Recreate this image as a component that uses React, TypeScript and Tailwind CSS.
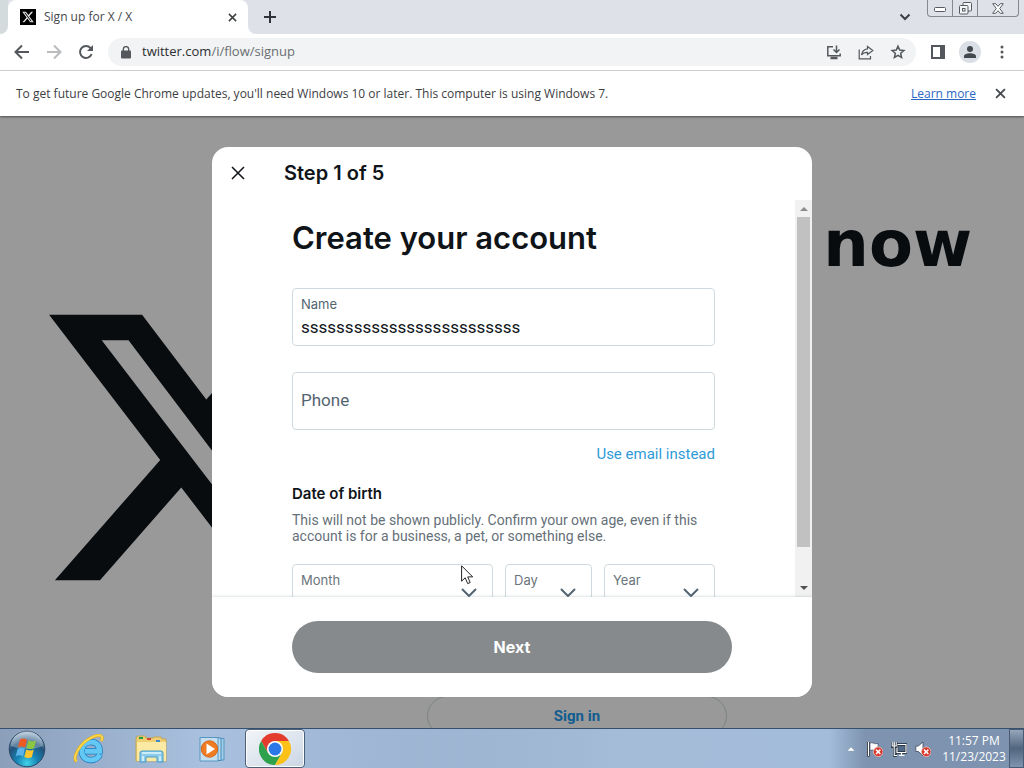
import type { ReactNode } from 'react';

const X_PATH =
  'M18.244 2.25h3.308l-7.227 8.26 8.502 11.24H16.17l-5.214-6.817L4.99 21.75H1.68l7.73-8.835L1.254 2.25H8.08l4.713 6.231zm-1.161 17.52h1.833L7.084 4.126H5.117z';

const UI = "font-['Open_Sans','Noto_Sans',sans-serif]";
const BODY = "font-['Inter','Roboto',sans-serif]";

function Cross({ className }: { className: string }) {
  return (
    <svg viewBox="0 0 12 12" className={className} fill="none" stroke="currentColor" strokeWidth="2">
      <path d="M1.2 1.2l9.6 9.6M10.8 1.2L1.2 10.8" />
    </svg>
  );
}

function IconButton({ label, children, className = '' }: { label: string; children: ReactNode; className?: string }) {
  return (
    <button type="button" aria-label={label} className={`flex size-8 shrink-0 items-center justify-center ${className}`}>
      {children}
    </button>
  );
}

function TabStrip() {
  return (
    <div className="flex h-[34px] items-stretch bg-[#dee1e8]">
      <div className="w-2 shrink-0 bg-white">
        <div className="h-full rounded-br-lg bg-[#d3dbdd]" />
      </div>
      <div className="flex w-60 shrink-0 items-center rounded-t-lg bg-white pr-2 pl-3">
        <svg viewBox="0 0 24 24" className="size-4 shrink-0">
          <rect width="24" height="24" />
          <path d={X_PATH} fill="#e8e8e8" transform="translate(2.4 2.4) scale(.8)" />
        </svg>
        <span className="ml-2 flex-1 text-xs text-[#45484c]">Sign up for X / X</span>
        <button type="button" aria-label="Close tab" className="flex size-4 items-center justify-center text-[#3c4043]">
          <Cross className="size-[9px]" />
        </button>
      </div>
      <div className="flex flex-1 bg-white">
        <div className="flex flex-1 items-stretch rounded-bl-lg bg-[#dee1e8]">
          <button type="button" aria-label="New tab" className="ml-1.5 flex w-8 items-center justify-center text-[#303338]">
            <svg viewBox="0 0 12 12" className="size-3" stroke="currentColor" strokeWidth="2">
              <path d="M6 0v12M0 6h12" />
            </svg>
          </button>
          <div className="flex-1" />
          <button type="button" aria-label="Search tabs" className="mr-1.5 flex w-8 items-center justify-center text-[#3c4043]">
            <svg viewBox="0 0 12 8" className="h-2 w-3" fill="none" stroke="currentColor" strokeWidth="2">
              <path d="M1.5 1.5L6 6l4.500-4.500" />
            </svg>
          </button>
          <div className="mr-[5px] flex h-[17px] divide-x divide-[#85898f] rounded-b border border-t-0 border-[#85898f] text-[#575b61]">
            <button type="button" aria-label="Minimize" className="flex w-[25px] items-center justify-center">
              <svg viewBox="0 0 12 10" className="h-[10px] w-3" fill="#fff" stroke="currentColor">
                <rect x=".5" y="4.500" width="11" height="4" rx="1" />
              </svg>
            </button>
            <button type="button" aria-label="Restore" className="flex w-[25px] items-center justify-center">
              <svg viewBox="0 0 13 13" className="size-[13px]" fill="#f4f5f7" stroke="currentColor">
                <rect x="4" y=".5" width="8.500" height="8.500" rx="1" />
                <rect x=".5" y="3.500" width="8.500" height="8.500" rx="1" />
                <rect x="3.500" y="6.500" width="2.500" height="2.500" />
              </svg>
            </button>
            <button type="button" aria-label="Close window" className="flex w-10 items-center justify-center">
              <svg viewBox="0 0 12 11" className="h-[11px] w-3" fill="#fff" stroke="currentColor">
                <path d="M.7.7h3L6 3.300 8.300.7h3L7.700 5.500l3.600 4.800h-3L6 7.700l-2.300 2.600h-3l3.600-4.800z" />
              </svg>
            </button>
          </div>
        </div>
      </div>
    </div>
  );
}

function Toolbar() {
  return (
    <div className="flex h-[37px] items-center border-b border-[#d5d5d5] bg-white px-1.5 text-[#54575b]">
      <IconButton label="Back">
        <svg viewBox="0 0 16 16" className="size-4" fill="none" stroke="currentColor" strokeWidth="2">
          <path d="M15 8H2M8 1.500L1.500 8 8 14.500" />
        </svg>
      </IconButton>
      <IconButton label="Forward" className="text-[#b9bbbd]">
        <svg viewBox="0 0 16 16" className="size-4" fill="none" stroke="currentColor" strokeWidth="2">
          <path d="M1 8h13M8 1.500L14.500 8 8 14.500" />
        </svg>
      </IconButton>
      <IconButton label="Reload">
        <svg viewBox="0 0 16 16" className="size-4" fill="none" stroke="currentColor" strokeWidth="2">
          <path d="M13.600 10.200A6 6 0 1 1 12.600 4.100L14 5.500" />
          <path d="M15 1v6H9z" fill="currentColor" stroke="none" />
        </svg>
      </IconButton>
      <div className="ml-1.5 flex h-7 min-w-0 flex-1 items-center rounded-full bg-[#f1f3f4] pr-0.5 pl-[13px]">
        <svg viewBox="0 0 10 13" className="h-[13px] w-[10px] shrink-0">
          <rect y="4.500" width="10" height="8" rx="1" fill="#54575b" />
          <path d="M2.300 5V3.300a2.700 2.700 0 0 1 5.400 0V5" fill="none" stroke="#54575b" strokeWidth="1.400" />
        </svg>
        <span className="ml-[11px] flex-1 text-[13px] text-[#6a6d71]">
          <span className="text-[#2c2e31]">twitter.com</span>/i/flow/signup
        </span>
        <IconButton label="Install">
          <svg viewBox="0 0 16 15" className="h-[15px] w-4" fill="none" stroke="currentColor" strokeWidth="1.500">
            <path d="M7 1.800H1.800v9h12.400V8.500M10.500.5v6M7.500 4.500l3 3 3-3" />
            <path d="M4.500 13h7" strokeWidth="2.500" />
          </svg>
        </IconButton>
        <IconButton label="Share">
          <svg viewBox="0 0 16 15" className="h-[15px] w-4" fill="none" stroke="currentColor" strokeWidth="1.200">
            <path d="M1.200 4.500v9.300h11.300V11" />
            <path d="M9.500 1.500l5.300 4-5.300 4V7.300C7 7.200 5 8 3.500 10c.5-3.500 2.500-5.800 6-6.200z" />
          </svg>
        </IconButton>
        <IconButton label="Bookmark this tab">
          <svg viewBox="0 0 16 16" className="size-4" fill="none" stroke="currentColor" strokeWidth="1.500">
            <path d="M8 2.200l1.700 3.900 4.200.4-3.200 2.800.9 4.200L8 11.300l-3.600 2.200.9-4.200-3.200-2.800 4.200-.4z" />
          </svg>
        </IconButton>
      </div>
      <IconButton label="Side panel" className="ml-1.5">
        <svg viewBox="0 0 14 14" className="size-3.5">
          <path d="M1 1h12v12H1z" fill="none" stroke="currentColor" strokeWidth="2" />
          <path d="M9 0h5v14H9z" fill="currentColor" />
        </svg>
      </IconButton>
      <IconButton label="Profile">
        <svg viewBox="0 0 22 22" className="size-[22px]">
          <circle cx="11" cy="11" r="11" fill="#dadee5" />
          <circle cx="11" cy="8" r="3" fill="#43484f" />
          <path d="M5 17v-1.800c0-2 3-3 6-3s6 1 6 3V17z" fill="#43484f" />
        </svg>
      </IconButton>
      <IconButton label="Menu">
        <svg viewBox="0 0 4 14" className="h-3.5 w-1" fill="currentColor">
          <circle cx="2" cy="2" r="1.500" />
          <circle cx="2" cy="7" r="1.500" />
          <circle cx="2" cy="12" r="1.500" />
        </svg>
      </IconButton>
    </div>
  );
}

function InfoBar() {
  return (
    <div className="z-10 flex h-[45px] items-center bg-white pr-[18px] pl-4 text-xs text-[#3c4043] shadow-[0_1px_2px_rgba(0,0,0,0.5)]">
      <p className="flex-1">
        To get future Google Chrome updates, you'll need Windows 10 or later. This computer is using Windows 7.
      </p>
      <a href="#learn" className="mr-[19px] text-[#2a67c5] underline">
        Learn more
      </a>
      <button type="button" aria-label="Dismiss" className="text-[#45484c]">
        <Cross className="size-[11px]" />
      </button>
    </div>
  );
}

function BirthSelect({ id, label, className }: { id: string; label: string; className: string }) {
  return (
    <div className={`grid h-[58px] rounded border border-[#cfd9de] ${className}`}>
      <label htmlFor={id} className="col-start-1 row-start-1 px-2 pt-1.5 text-[13px] leading-[18px] text-[#6a747c]">
        {label}
      </label>
      <select id={id} className="col-start-1 row-start-1 w-full appearance-none bg-transparent outline-none" />
      <svg
        viewBox="0 0 16 10"
        className="pointer-events-none col-start-1 row-start-1 mt-[23px] mr-[15px] h-[10px] w-4 justify-self-end"
        fill="none"
        stroke="#536471"
        strokeWidth="2"
      >
        <path d="M1 1l7 7 7-7" />
      </svg>
    </div>
  );
}

function ScrollBar() {
  return (
    <div className="flex w-[17px] shrink-0 flex-col items-center bg-[#f1f1f1]" aria-hidden="true">
      <div className="flex h-[17px] items-center">
        <svg viewBox="0 0 8 4" className="h-1 w-2" fill="#8b8b8b">
          <path d="M0 4l4-4 4 4z" />
        </svg>
      </div>
      <div className="h-[330px] w-[13px] bg-[#c1c1c1]" />
      <div className="flex-1" />
      <div className="flex h-[19px] items-center">
        <svg viewBox="0 0 8 4" className="h-1 w-2" fill="#505050">
          <path d="M0 0l4 4 4-4z" />
        </svg>
      </div>
    </div>
  );
}

function SignupDialog() {
  return (
    <div
      role="dialog"
      aria-label="Create your account"
      className="flex h-[550px] w-[600px] flex-col overflow-hidden rounded-2xl bg-white text-[#0f1419]"
    >
      <header className="flex h-[52px] shrink-0 items-center pl-[19px]">
        <button type="button" aria-label="Close" className="flex size-[14px] items-center justify-center">
          <svg viewBox="0 0 14 14" className="size-[14px]" stroke="currentColor" strokeWidth="1.500">
            <path d="M1 1l12 12M13 1L1 13" />
          </svg>
        </button>
        <h2 className="ml-[39px] text-xl font-semibold">Step 1 of 5</h2>
      </header>
      <div className="mt-px flex min-h-0 flex-1">
        <form id="signup" className="min-w-0 flex-1 overflow-hidden px-20 pt-5">
          <h1 className="text-[31px] leading-9 font-semibold">Create your account</h1>
          <div className="mt-8 flex h-[58px] flex-col rounded border border-[#cfd9de] px-2 pt-1.5">
            <label htmlFor="name" className="text-[13px] leading-[18px] text-[#536471]">
              Name
            </label>
            <input
              id="name"
              defaultValue="sssssssssssssssssssssssss"
              className="h-7 w-full font-['Roboto',sans-serif] text-[17px] outline-none"
            />
          </div>
          <div className="mt-[26px] flex h-[58px] items-center rounded border border-[#cfd9de] px-2">
            <input
              aria-label="Phone"
              placeholder="Phone"
              className="w-full font-['Roboto',sans-serif] text-[17px] outline-none placeholder:text-[#536471]"
            />
          </div>
          <div className="mt-3.5 flex justify-end">
            <a href="#email" className="font-['Roboto',sans-serif] text-[15px] leading-5 text-[#2f9bd8]">
              Use email instead
            </a>
          </div>
          <h3 className="mt-5 text-[15px] leading-5 font-semibold">Date of birth</h3>
          <p className="mt-2 font-['Roboto',sans-serif] text-sm leading-4 text-[#667078]">
            This will not be shown publicly. Confirm your own age, even if this account is for a business, a pet, or
            something else.
          </p>
          <div className="mt-5 flex gap-3">
            <BirthSelect id="month" label="Month" className="flex-1" />
            <BirthSelect id="day" label="Day" className="w-[87px]" />
            <BirthSelect id="year" label="Year" className="w-[111px]" />
          </div>
        </form>
        <ScrollBar />
      </div>
      <footer className="z-10 bg-white px-20 py-6 shadow-[0_0_3px_rgba(101,119,134,0.35)]">
        <button
          type="submit"
          form="signup"
          className="h-[52px] w-full rounded-full bg-[#878a8c] text-base font-bold text-white"
        >
          Next
        </button>
      </footer>
    </div>
  );
}

function LandingPage() {
  return (
    <main className={`relative min-h-0 flex-1 overflow-hidden bg-white ${BODY}`}>
      <div className="flex justify-between">
        <svg viewBox="0 0 24 24" className="mt-[168px] ml-8 size-[327px] shrink-0" fill="#0f1419">
          <path d={X_PATH} />
        </svg>
        <div className="mr-[52px] w-[545px] pt-[92px]">
          <h1 className="text-right font-['DejaVu_Sans',sans-serif] text-[64px] leading-[72px] font-bold text-[#0f1419]">now</h1>
          <button
            type="button"
            className="mt-[416px] h-10 w-[300px] rounded-full border border-[#cfd9de] font-['Roboto',sans-serif] text-[15px] font-bold text-[#1d9bf0]"
          >
            Sign in
          </button>
        </div>
      </div>
      <div className="absolute inset-0 flex items-center justify-center bg-black/40">
        <SignupDialog />
      </div>
      <svg viewBox="0 0 13 20" className="absolute top-[449px] left-[461px] h-5 w-[13px]" fill="#fff" stroke="#222">
        <path d="M.6.8v15.400l3.600-3.400 2.500 5.800 2.500-1.100-2.500-5.600h5z" />
      </svg>
    </main>
  );
}

function StartOrb() {
  return (
    <svg viewBox="0 0 38 38" className="size-[38px]">
      <defs>
        <radialGradient id="orb" cx=".5" cy=".9" r=".85">
          <stop offset="0" stopColor="#42d2e8" />
          <stop offset=".35" stopColor="#1684b5" />
          <stop offset=".7" stopColor="#225179" />
          <stop offset="1" stopColor="#9db6cb" />
        </radialGradient>
      </defs>
      <circle cx="19" cy="19" r="17.800" fill="url(#orb)" stroke="#2b4867" />
      <path d="M3 16a16 15 0 0 1 32 0c-9 4-22 4-32 0z" fill="#fff" opacity=".28" />
      <path d="M12 9.500c2.500-1.500 5-1 7 .3l-1.800 7.700c-2.300-1.400-4.700-1.500-7.200-.2z" fill="#ee5a24" />
      <path d="M20.300 10.300c2.500 1.400 5 1.400 7.700.2l-2 7.700c-2.500 1.200-5 1.100-7.500-.2z" fill="#8dc63f" />
      <path d="M9.700 18.700c2.500-1.300 5-1.100 7.200.2l-1.900 7.500c-2.200-1.300-4.600-1.500-7.300-.2z" fill="#5bb3ea" />
      <path d="M18.200 19.400c2.500 1.400 5 1.500 7.500.3l-1.900 7.500c-2.600 1.200-5 1-7.500-.3z" fill="#fdc62f" />
    </svg>
  );
}

function ExplorerE() {
  return (
    <svg viewBox="0 0 32 32" className="size-8" fill="none">
      <path d="M27 21.500C25 25 21.800 27 18 27c-5.400 0-9.200-3.900-9.200-9S12.600 9 18 9c5.400 0 8.700 3.700 8.500 9.300H12" stroke="#1978bd" strokeWidth="6.400" />
      <path d="M27 21.500C25 25 21.800 27 18 27c-5.400 0-9.200-3.900-9.200-9S12.600 9 18 9c5.400 0 8.700 3.700 8.500 9.300H12" stroke="#63c8f3" strokeWidth="5" />
      <path d="M3.500 28.500C-1 25 6 11 17.500 5 23 2 28 1.500 29 4c.4 1 0 2.500-.8 4" stroke="#d69c12" strokeWidth="3" />
      <path d="M3.500 28.500C-1 25 6 11 17.500 5 23 2 28 1.500 29 4c.4 1 0 2.500-.8 4" stroke="#fbd548" strokeWidth="2.200" />
    </svg>
  );
}

function FolderIcon() {
  return (
    <svg viewBox="0 0 32 28" className="h-7 w-8">
      <path d="M1 3l2-2h7l1 2h7l1-1h7l1 2h4v22H1z" fill="#efcf72" stroke="#c2a552" />
      <path d="M4 2h4v2H4z" fill="#279a44" />
      <path d="M12 3h4v2h-4z" fill="#d24830" />
      <path d="M21 5h4v2h-4z" fill="#3c8bc4" />
      <path d="M2 7h29v19H2z" fill="#faeaa3" />
      <path d="M5 27V18q0-2 2-2h19q2 0 2 2v9h-6v-5H11v5z" fill="#8cccea" stroke="#4b9bc7" />
      <path d="M7 18h19M8 21v5M25 21v5" stroke="#e1f6ff" strokeWidth="1.500" />
    </svg>
  );
}

function MediaIcon() {
  return (
    <svg viewBox="0 0 28 26" className="h-[26px] w-7">
      <path d="M9 2.500h17v21.500H9z" fill="#a1cee9" stroke="#5596c0" />
      <path d="M6 2h17v22.500H6z" fill="#b7dcf0" stroke="#4687b4" />
      <path d="M2 1.500h18v23.500H2z" fill="#c5dff1" stroke="#5596c0" />
      <circle cx="11.500" cy="13" r="8.200" fill="#ef7b23" stroke="#d5651a" />
      <path d="M8.500 7.500L17 13l-8.500 5.500z" fill="#fff" />
    </svg>
  );
}

function ChromeIcon() {
  return (
    <svg viewBox="0 0 32 32" className="size-8">
      <path d="M16 8h13.860A16 16 0 0 0 2.140 8L9.070 20z" fill="#e33b2e" />
      <path d="M2.140 8A16 16 0 0 0 16 32l6.930-12L16 16 9.070 20z" fill="#2da14c" />
      <path d="M16 8h13.860A16 16 0 0 1 16 32l6.930-12z" fill="#fbc116" />
      <circle cx="16" cy="16" r="8" fill="#fff" />
      <circle cx="16" cy="16" r="6.400" fill="#2a77e8" />
    </svg>
  );
}

function ErrorBadge() {
  return (
    <g>
      <circle cx="11.200" cy="10.800" r="4.800" fill="#d9362b" stroke="#f3c4bf" strokeWidth=".8" />
      <path d="M9 8.600l4.400 4.400M13.400 8.600L9 13" stroke="#fff" strokeWidth="1.500" />
    </g>
  );
}

function Taskbar() {
  return (
    <footer className="flex h-10 shrink-0 items-stretch border-t border-[#35506f] bg-linear-to-r from-[#8b9fba] via-[#a9c1df] via-20% to-[#748ba8]">
      <button type="button" aria-label="Start" className="flex w-[54px] items-center justify-center">
        <StartOrb />
      </button>
      <button type="button" aria-label="Internet Explorer" className="ml-1 flex w-[62px] items-center justify-center">
        <ExplorerE />
      </button>
      <button type="button" aria-label="Windows Explorer" className="flex w-[62px] items-center justify-center">
        <FolderIcon />
      </button>
      <button type="button" aria-label="Media Player" className="flex w-[60px] items-center justify-center">
        <MediaIcon />
      </button>
      <button
        type="button"
        aria-label="Google Chrome"
        className="ml-[3px] flex w-[60px] items-center justify-center rounded-sm border border-[#4b5f79] bg-linear-to-br from-[#f2f5f9] to-[#cbd6e4] shadow-[inset_0_0_0_1px_#fff]"
      >
        <ChromeIcon />
      </button>
      <div className="flex-1 bg-linear-to-r from-transparent via-[#a5bcd9] via-60% to-[#a3bcd9]" />
      <div className="flex items-center gap-2 bg-linear-to-r from-[#a3bcd9] to-[#7d93b0] to-20% pl-[17px] text-white">
        <button type="button" aria-label="Show hidden icons" className="mr-1">
          <svg viewBox="0 0 8 4" className="h-1 w-2" fill="#fff" stroke="#5d728c" strokeWidth=".3">
            <path d="M0 4l4-4 4 4z" />
          </svg>
        </button>
        <svg viewBox="0 0 16 16" className="size-4">
          <path d="M1.500 1v14.500" stroke="#222" strokeWidth="2.600" />
          <path d="M1.500 1v14" stroke="#fff" strokeWidth="1.200" />
          <path d="M3 2c3-1 4 1.500 8 .5v7C8 10.500 6 8 3 9.500z" fill="#fff" stroke="#39465a" strokeWidth=".6" />
          <ErrorBadge />
        </svg>
        <svg viewBox="0 0 16 16" className="size-4" fill="none">
          <path d="M6 3.500h9v8H6z" fill="#526a86" stroke="#1c2733" strokeWidth="2.400" />
          <path d="M6 3.500h9v8H6zM8 14.500h5.500M10.500 12v2" stroke="#fff" strokeWidth="1.200" />
          <path d="M1.200 1v4.500h4V1M3.200 5v9.500H6" stroke="#1c2733" strokeWidth="2.400" />
          <path d="M1.200 1v4h4V1M3.200 1v13.500H6" stroke="#fff" strokeWidth="1.100" />
        </svg>
        <svg viewBox="0 0 16 16" className="size-4">
          <path d="M.8 5h2.500L8 1v13.500L3.300 10.500H.8z" fill="#fff" stroke="#39465a" strokeWidth=".8" />
          <ErrorBadge />
        </svg>
        <div className="w-[70px] text-center text-xs leading-4">
          <div>11:57 PM</div>
          <div>11/23/2023</div>
        </div>
      </div>
      <button
        type="button"
        aria-label="Show desktop"
        className="w-[15px] border border-[#495c73] bg-linear-to-b from-[#95a6ba] via-[#52667f] to-[#7f94ae]"
      />
    </footer>
  );
}

export default function App() {
  return (
    <div className={`flex h-screen flex-col overflow-hidden ${UI}`}>
      <TabStrip />
      <Toolbar />
      <InfoBar />
      <LandingPage />
      <Taskbar />
    </div>
  );
}
